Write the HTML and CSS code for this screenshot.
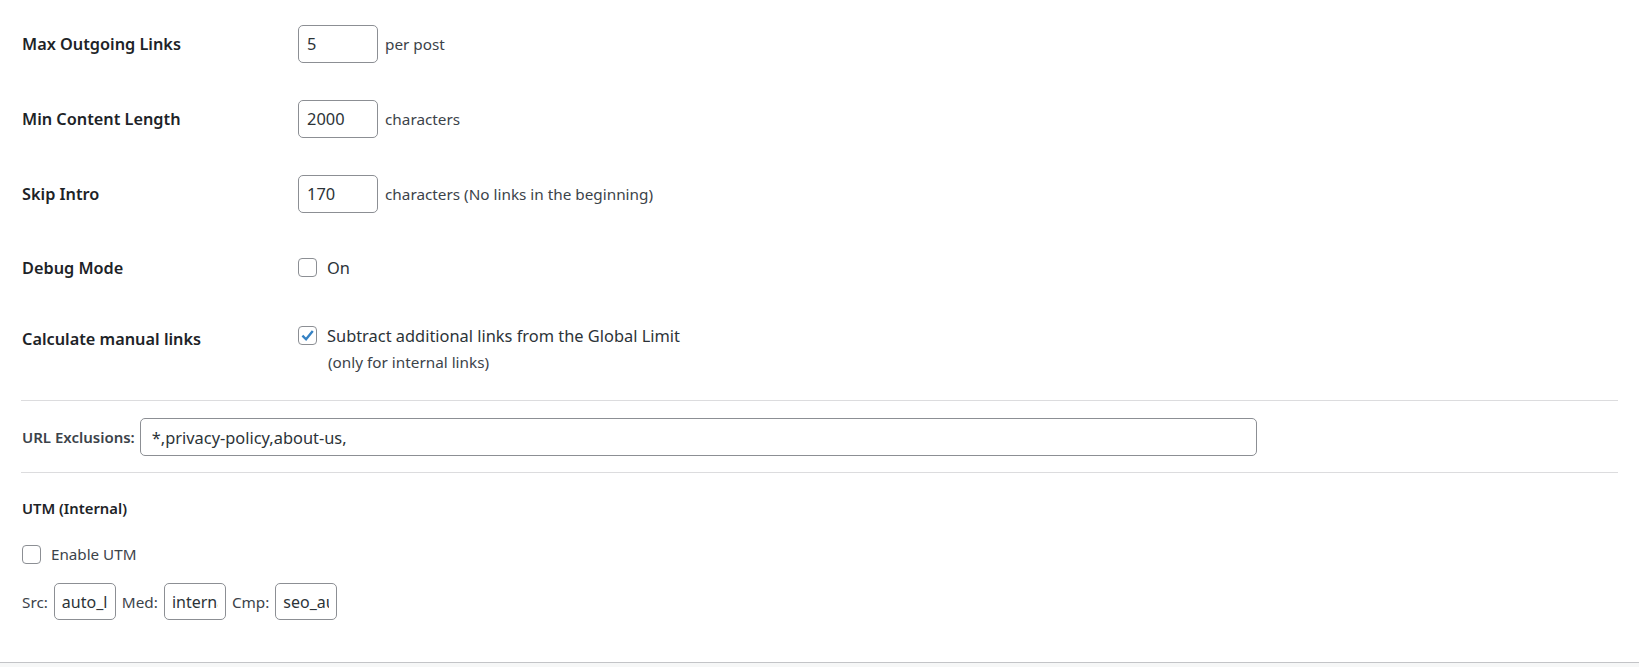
FILE: index.html
```html
<!DOCTYPE html>
<html lang="en">

<head>
    <meta charset="UTF-8">
    <meta name="viewport" content="width=device-width, initial-scale=1.0">
    <title>Auto Links Settings</title>
    <link rel="stylesheet" href="styles.css">
</head>

<body>
    <div class="panel">
        <div class="setting">
            <div class="setting-label">Max Outgoing Links</div>
            <div class="field">
                <input class="input small-text" type="text" value="5">
                <span class="description">per post</span>
            </div>
        </div>
        <div class="setting">
            <div class="setting-label">Min Content Length</div>
            <div class="field">
                <input class="input small-text" type="text" value="2000">
                <span class="description">characters</span>
            </div>
        </div>
        <div class="setting">
            <div class="setting-label">Skip Intro</div>
            <div class="field">
                <input class="input small-text" type="text" value="170">
                <span class="description">characters (No links in the beginning)</span>
            </div>
        </div>
        <div class="setting debug">
            <div class="setting-label">Debug Mode</div>
            <label class="check">
                <span class="cb"></span>
                <span>On</span>
            </label>
        </div>
        <div class="setting calc">
            <div class="setting-label">Calculate manual links</div>
            <div class="field-stack">
                <label class="check">
                    <span class="cb">
                        <svg width="17" height="17" viewBox="0 0 20 20">
                            <path d="M4 10.2 L8.3 14.4 L16.2 4.6" fill="none" stroke="#3582c4" stroke-width="2.8" />
                        </svg>
                    </span>
                    <span>Subtract additional links from the Global Limit</span>
                </label>
                <div class="note">(only for internal links)</div>
            </div>
        </div>

        <hr class="divider">

        <div class="exclusions">
            <label class="inline-label">URL Exclusions:</label>
            <input class="input wide" type="text" value="*,privacy-policy,about-us,">
        </div>

        <hr class="divider flush">

        <div class="utm-title">UTM (Internal)</div>
        <label class="check small utm-enable">
            <span class="cb"></span>
            <span>Enable UTM</span>
        </label>
        <div class="utm-fields">
            <span>Src:</span>
            <input class="input utm" type="text" value="auto_links">
            <span>Med:</span>
            <input class="input utm" type="text" value="internal">
            <span>Cmp:</span>
            <input class="input utm" type="text" value="seo_auto">
        </div>
    </div>
</body>

</html>
```

FILE: styles.css
```css
* {
    box-sizing: border-box;
}

body {
    margin: 0px;
    background-color: #f6f7f7;
    font-family: "Noto Sans", "Open Sans", sans-serif;
    color: #3c434a;
    overflow: hidden;
}

.panel {
    height: 663px;
    padding: 6px 21px 0px 21px;
    background-color: #fff;
    border-bottom: 1px solid #c3c4c7;
    box-shadow: 0px 1px 0px #dcdcde;
}

.setting {
    display: grid;
    grid-template-columns: 276px 1fr;
    align-items: center;
    height: 75px;
    padding-left: 1px;
}

.setting.debug {
    height: 73px;
}

.setting.calc {
    height: 88px;
    align-items: start;
}

.setting-label {
    font-size: 16.3px;
    font-weight: 600;
    line-height: 23px;
    padding-top: 1px;
    color: #1d2327;
}

.calc .setting-label {
    padding-top: 24px;
}

.calc .field-stack {
    padding-top: 20px;
}

.field {
    display: flex;
    align-items: center;
    gap: 7px;
}

.input {
    height: 38px;
    padding: 0px 8px;
    font-family: inherit;
    font-size: 16.4px;
    color: #2c3338;
    background-color: #fff;
    border: 1px solid #8c8f94;
    border-radius: 5px;
    outline: none;
}

.small-text {
    width: 80px;
}

.description {
    font-size: 15.3px;
    color: #3c434a;
}

.check {
    display: flex;
    align-items: center;
    gap: 10px;
    font-size: 16.4px;
    line-height: 23px;
    color: #2c3338;
}

.check.small {
    font-size: 15.2px;
    gap: 10px;
    color: #3c434a;
}

.cb {
    display: inline-flex;
    align-items: center;
    justify-content: center;
    flex-shrink: 0;
    width: 19px;
    height: 19px;
    background-color: #fff;
    border: 1px solid #8c8f94;
    border-radius: 4px;
}

.note {
    margin: 4px 0px 0px 30px;
    font-size: 15.3px;
    line-height: 22px;
    color: #3c434a;
}

.divider {
    margin: 8px 0px 0px;
    border: 0px;
    border-top: 1px solid #dcdcde;
}

.divider.flush {
    margin-top: 0px;
}

.exclusions {
    display: flex;
    align-items: center;
    gap: 5px;
    padding: 17px 0px 16px 1px;
}

.inline-label {
    font-size: 15px;
    font-weight: 600;
    color: #3c434a;
}

.wide {
    width: 1117px;
    padding-left: 11px;
}

.utm-title {
    margin: 24px 0px 0px 1px;
    font-size: 14.8px;
    font-weight: 600;
    line-height: 22px;
    color: #1d2327;
}

.utm-enable {
    margin: 24px 0px 0px 1px;
    line-height: 22px;
}

.utm-fields {
    display: flex;
    align-items: center;
    gap: 6px;
    margin: 18px 0px 0px 1px;
    font-size: 15.3px;
    color: #3c434a;
}

.utm {
    height: 37px;
    width: 62px;
    padding: 0px 7px;
    font-size: 16px;
}
```
